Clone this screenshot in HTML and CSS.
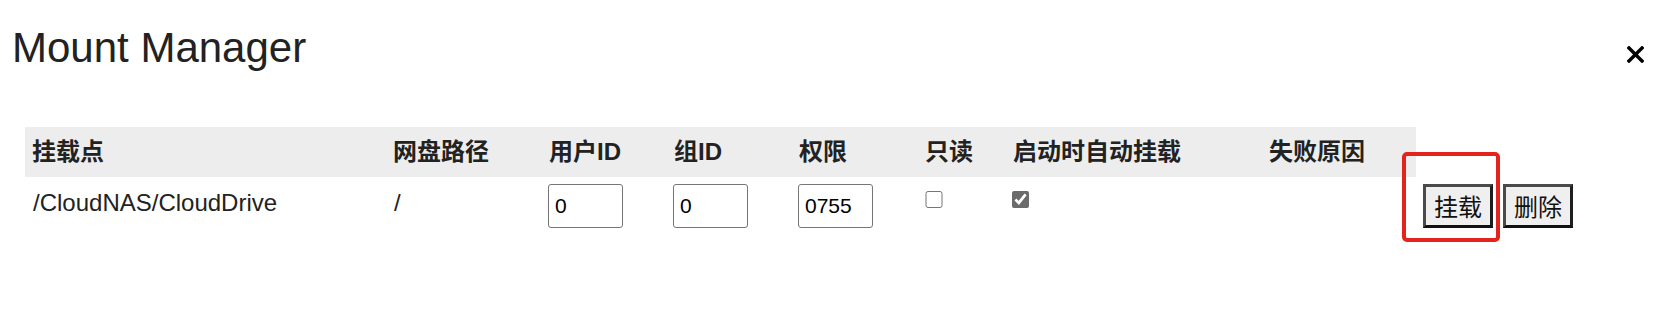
FILE: index.html
```html
<!DOCTYPE html>
<html lang="zh-CN">
<head>
<meta charset="utf-8">
<title>Mount Manager</title>
<link rel="stylesheet" href="styles.css">
</head>
<body>
<div class="dialog">
  <div class="dialog-head">
    <h1 class="dialog-title">Mount Manager</h1>
    <button class="close-btn" aria-label="close">
      <svg width="17" height="17" viewBox="0 0 17 17"><path d="M2 2 L15 15 M15 2 L2 15" stroke="#000" stroke-width="3.4" stroke-linecap="square" fill="none"/></svg>
    </button>
  </div>
  <table class="mounts">
    <colgroup>
      <col class="c1"><col class="c2"><col class="c3"><col class="c4"><col class="c5"><col class="c6"><col class="c7"><col class="c8"><col class="c9">
    </colgroup>
    <thead>
      <tr>
        <th>挂载点</th>
        <th>网盘路径</th>
        <th>用户ID</th>
        <th>组ID</th>
        <th>权限</th>
        <th>只读</th>
        <th>启动时自动挂载</th>
        <th>失败原因</th>
      </tr>
    </thead>
    <tbody>
      <tr>
        <td>/CloudNAS/CloudDrive</td>
        <td>/</td>
        <td class="ctl"><input class="field" type="text" value="0"></td>
        <td class="ctl"><input class="field" type="text" value="0"></td>
        <td class="ctl"><input class="field" type="text" value="0755"></td>
        <td class="chk"><input class="box" type="checkbox"></td>
        <td class="chk"><input class="box box-on" type="checkbox" checked></td>
        <td></td>
        <td class="ctl actions">
          <div class="btns">
            <button class="act">挂载</button>
            <button class="act">删除</button>
          </div>
          <div class="highlight"></div>
        </td>
      </tr>
    </tbody>
  </table>
</div>
</body>
</html>
```
FILE: styles.css
```css
html, body {
  margin: 0;
  padding: 0;
  background: #fff;
}
body {
  font-family: "Liberation Sans", "Noto Sans CJK SC", Arial, sans-serif;
  color: #222;
  width: 1657px;
  height: 312px;
  overflow: hidden;
}
.dialog {
  padding: 24px 13px 0 12px;
}
.dialog-head {
  display: flex;
  justify-content: space-between;
  align-items: flex-start;
}
.dialog-title {
  margin: 0;
  font-size: 42px;
  line-height: 48px;
  font-weight: normal;
  color: #222;
}
.close-btn {
  margin: 22px 0 0 0;
  padding: 0;
  border: 0;
  background: none;
  width: 17px;
  height: 17px;
  display: block;
}
.close-btn svg {
  display: block;
}
.mounts {
  margin: 55px 0 0 13px;
  border-collapse: collapse;
  border-spacing: 0;
  table-layout: fixed;
  width: 1561px;
}
.c1 { width: 361px; }
.c2 { width: 156px; }
.c3 { width: 125px; }
.c4 { width: 125px; }
.c5 { width: 126px; }
.c6 { width: 88px; }
.c7 { width: 256px; }
.c8 { width: 154px; }
.c9 { width: 170px; }
.mounts th {
  background: #ededed;
  text-align: left;
  font-weight: bold;
  font-size: 24px;
  line-height: 26px;
  padding: 12px 6px 12px 7px;
  color: #222;
  white-space: nowrap;
}
.mounts td {
  font-size: 24px;
  line-height: 26px;
  padding: 13px 6px 12px 8px;
  vertical-align: top;
  white-space: nowrap;
  color: #222;
}
.mounts td.ctl {
  padding-top: 7px;
  padding-left: 6px;
}
.mounts td.chk {
  padding-top: 14px;
  padding-left: 7px;
}
.field {
  box-sizing: border-box;
  width: 75px;
  height: 44px;
  margin: 0;
  padding: 0 6px;
  border: 1px solid #767676;
  border-radius: 3px;
  font-family: "Liberation Sans", Arial, sans-serif;
  font-size: 21px;
  color: #000;
  background: #fff;
}
.box {
  width: 18px;
  height: 17px;
  margin: 0;
  display: block;
}
.box-on {
  accent-color: #6b6b6b;
  width: 17px;
  margin-left: -1px;
}
.actions {
  position: relative;
}
.btns {
  display: flex;
  gap: 10px;
  padding-left: 1px;
}
.act {
  box-sizing: border-box;
  width: 70px;
  height: 44px;
  margin: 0;
  padding: 0 8px;
  font-family: "Noto Sans CJK SC", "Liberation Sans", sans-serif;
  font-size: 24px;
  line-height: 26px;
  color: #111;
  background: #efefef;
  border: 3px solid;
  border-color: #4a4a4a #1e1e1e #111 #4a4a4a;
  border-radius: 0;
}
.highlight {
  position: absolute;
  left: -14px;
  top: -25px;
  width: 98px;
  height: 90px;
  box-sizing: border-box;
  border: 4px solid #e5231d;
  border-radius: 5px;
  pointer-events: none;
}
```
